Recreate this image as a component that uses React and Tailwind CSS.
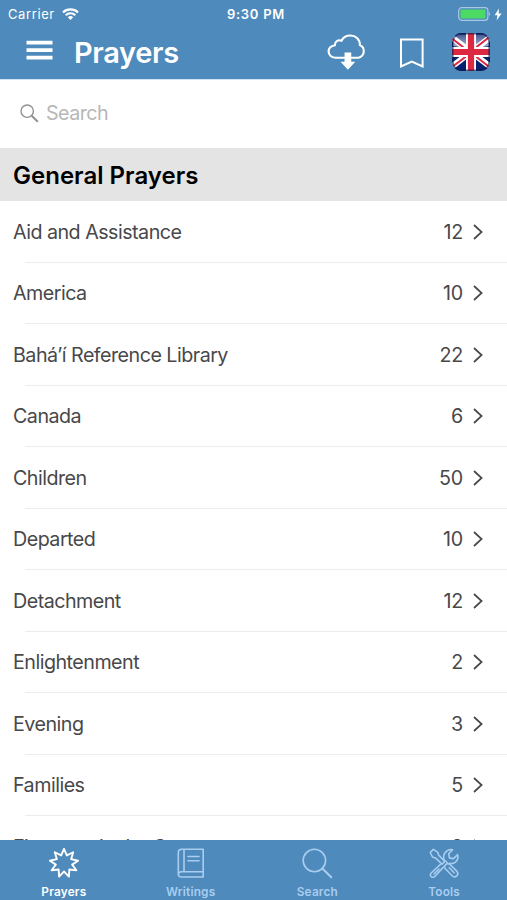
const rows = [
  ["Aid and Assistance", 12],
  ["America", 10],
  ["Bahá’í Reference Library", 22],
  ["Canada", 6],
  ["Children", 50],
  ["Departed", 10],
  ["Detachment", 12],
  ["Enlightenment", 2],
  ["Evening", 3],
  ["Families", 5],
  ["Firmness in the Covenant", 8],
];

function StatusBar() {
  return (
    <div className="flex h-7 items-center justify-between pl-2 pr-[5px] text-[13px] leading-7">
      <div className="flex w-[170px] items-center gap-[7px]">
        <span className="tracking-[0.6px]">Carrier</span>
        <svg width="17" height="12" viewBox="0 0 17 12" fill="none" stroke="white" strokeWidth="2.1">
          <path d="M1 4.4C5 0.4 12 0.4 16 4.4" />
          <path d="M3.7 7.2C6.3 4.6 10.7 4.6 13.3 7.2" />
          <path d="M8.5 12L5.8 9.3Q8.5 6.9 11.2 9.3Z" fill="white" stroke="none" />
        </svg>
      </div>
      <span className="ml-[2px] font-semibold tracking-[0.75px]">9:30 PM</span>
      <div className="flex w-[170px] items-center justify-end gap-[3px]">
        <svg width="33" height="14" viewBox="0 0 33 14">
          <rect x="0.7" y="0.7" width="29.2" height="12.6" rx="3" fill="none" stroke="#a9c9e3" strokeWidth="1.2" />
          <rect x="2.5" y="2.4" width="25" height="9.2" rx="1.2" fill="#4cd964" />
          <path d="M31 4.8Q33 7 31 9.2Z" fill="#a9c9e3" />
        </svg>
        <svg width="8" height="13" viewBox="0 0 8 13" fill="white">
          <path d="M5 0.5L0.6 7.2H3.5L2.6 12.5L7.6 5.4H4.6Z" />
        </svg>
      </div>
    </div>
  );
}

function Flag() {
  return (
    <svg width="38" height="38" viewBox="0 0 38 38">
      <defs>
        <clipPath id="flagClip"><rect width="38" height="38" rx="9" /></clipPath>
        <linearGradient id="gloss" x1="0" y1="0" x2="0" y2="1">
          <stop offset="0" stopColor="white" stopOpacity="0.25" />
          <stop offset="1" stopColor="white" stopOpacity="0.7" />
        </linearGradient>
      </defs>
      <g clipPath="url(#flagClip)">
        <rect width="38" height="38" fill="#06216f" />
        <path d="M1 1.5H37V13Q19 17 1 13Z" fill="url(#gloss)" />
        <path d="M-2 3L40 35M40 3L-2 35" stroke="white" strokeWidth="6" />
        <path d="M-2 4L18 19.5M40 2L20 17.5M-2 35.5L18 20.5M40 36L20 20.5" stroke="#dc2941" strokeWidth="2" />
        <path d="M19 0V38M0 19H38" stroke="white" strokeWidth="10" />
        <path d="M19 0V38M0 19H38" stroke="#dc2941" strokeWidth="6.2" />
      </g>
      <rect x="0.8" y="0.8" width="36.4" height="36.4" rx="8.5" fill="none" stroke="#101a48" strokeOpacity="0.65" strokeWidth="1.6" />
    </svg>
  );
}

function NavBar() {
  return (
    <div className="flex h-[51px] items-start pl-[26px] pr-[17px]">
      <svg className="mt-3" width="27" height="21" viewBox="0 0 27 21" fill="white">
        <path d="M0.5 0.8H26.5V4.6H0.5ZM0.5 8.3H26.5V12.1H0.5ZM0.5 15.8H26.5V19.6H0.5Z" />
      </svg>
      <h1 className="ml-[21px] mt-[7px] flex-1 text-[29px] font-semibold leading-9 tracking-[-0.35px]">Prayers</h1>
      <svg className="mt-[6px]" width="42" height="37" viewBox="0.5 0 40 37" preserveAspectRatio="none">
        <path d="M9 23.7H30.5A6.7 6.7 0 0 0 31.8 11.2C32 5 27.5 1.5 22.8 1.5C18.8 1.5 15.7 3.5 14.3 6.8C11 5.4 7.9 7.5 8 11.2C4.3 11.8 2 14.4 2 17.6C2 21 5 23.7 9 23.7Z" fill="none" stroke="white" strokeWidth="2" />
        <path d="M17.2 18.5H23.6V27.7H27.4L20.4 35.7L13.4 27.7H17.2Z" fill="white" />
      </svg>
      <svg className="ml-[30px] mt-[10px]" width="26" height="32" viewBox="0 0 26 32">
        <path d="M2 1.5H23.6V28.5L12.8 23.5L2 28.5Z" fill="none" stroke="white" strokeWidth="2" />
      </svg>
      <div className="ml-[27px] mt-[5px]"><Flag /></div>
    </div>
  );
}

function Row({ label, count }) {
  return (
    <li className="flex h-[61.5px] shrink-0 flex-col">
      <div className="flex flex-1 items-center pl-[13px] pr-6 pt-px text-[19.7px] leading-6 text-[#48484a]">
        <span className="flex-1 whitespace-nowrap tracking-[-0.52px]">{label}</span>
        <span className="tracking-[-0.2px]">{count}</span>
        <svg className="ml-[10px]" width="10" height="16" viewBox="0 0 10 16" fill="none" stroke="#48484a" strokeWidth="1.7">
          <path d="M1 1L8.6 8L1 15" />
        </svg>
      </div>
      <div className="ml-[25px] h-px bg-[#ececec]" />
    </li>
  );
}

const starPoints = Array.from({ length: 18 }, (_, i) => {
  const r = i % 2 ? 8.3 : 14.3;
  const a = (i * Math.PI) / 9 - Math.PI / 2;
  return `${15 + r * Math.cos(a)},${15.2 + r * Math.sin(a)}`;
}).join(" ");

const tabs = [
  ["Prayers", <polygon key="star" points={starPoints} strokeWidth="1.9" />],
  ["Writings", (
    <g key="book">
      <path d="M27.2 1.2H5.5Q2.3 1.2 2.3 4.5V26Q2.3 29 5.5 29H27.2V1.2ZM27.2 23.7H5.5Q2.3 23.7 2.3 26.5M8 1.2V23.7" />
      <path d="M12 8.5H23M12 12.7H23" />
    </g>
  )],
  ["Search", (
    <g key="search"><circle cx="12.4" cy="12.5" r="11.2" /><path d="M20.4 20.5L29.3 29.3" strokeWidth="2" /></g>
  )],
  ["Tools", (
    <g key="tools">
      <path d="M4.3 1.4L1.2 4.5L3.5 9L6.4 9.9L13 16.2L15.8 13.4L9.6 7.1L8.7 4.1Z" />
      <path d="M15.3 18.3L18.2 15.4Q20.2 15.8 21.5 17L28 23.4Q29.8 25.5 28 27.6Q25.6 29.9 23.4 28L16.8 21.3Q15.6 20 15.3 18.3ZM20.2 19.8L25.2 24.8" />
      <path d="M11.2 16.6L2.2 25Q0.4 27.2 2.4 28.8Q4.2 30 6 28.2L14.2 19.4M5 26L10 21" />
      <path d="M15.3 12.2Q13.5 8.5 16 4.8Q19 0.9 23.6 1.7L19.7 5.8L20.4 9.9L24.5 10.6L28.6 6.6Q29.9 11.2 26.2 14.4Q23.6 16.2 20.4 15.4M15.3 12.2L18 14.5" />
    </g>
  )],
];

function TabBar() {
  return (
    <nav className="grid h-[60px] shrink-0 grid-cols-4 bg-[#4e8abc]">
      {tabs.map(([name, icon], i) => (
        <div key={name} className={i === 0 ? "flex flex-col items-center pl-px pt-2 text-white" : "flex flex-col items-center pl-px pt-2 text-[#a9cdef]"}>
          <svg className="ml-px" width="31" height="31" viewBox="0 0 31 31" fill="none" stroke="currentColor" strokeWidth="1.6" strokeLinejoin="round" strokeLinecap="round">{icon}</svg>
          <span className="mt-[5px] text-[11.8px] font-semibold leading-4 tracking-[0.2px]">{name}</span>
        </div>
      ))}
    </nav>
  );
}

export default function App() {
  return (
    <div className="flex h-[900px] w-[507px] flex-col overflow-hidden bg-white font-['Inter',sans-serif]">
      <header className="h-20 shrink-0 border-b border-[#cfe4f5] bg-[#4e8abc] text-white">
        <StatusBar />
        <NavBar />
      </header>
      <div className="flex h-[68px] shrink-0 items-center pb-px pl-5 text-[19.7px] text-[#b7b7b7]">
        <svg width="19" height="19" viewBox="0 0 19 19" fill="none" stroke="#929292">
          <circle cx="7.2" cy="7.2" r="6.2" strokeWidth="1.4" />
          <path d="M11.7 11.7L17.8 17.8" strokeWidth="2" />
        </svg>
        <span className="ml-[7px] tracking-[-0.55px]">Search</span>
      </div>
      <h2 className="flex h-[53px] shrink-0 items-center bg-[#e4e4e4] pl-[13px] pt-0.5 text-[24px] font-semibold tracking-[0.02px] text-black">General Prayers</h2>
      <ul className="flex min-h-0 flex-1 flex-col overflow-hidden">
        {rows.map(([label, count]) => <Row key={label} label={label} count={count} />)}
      </ul>
      <TabBar />
    </div>
  );
}
